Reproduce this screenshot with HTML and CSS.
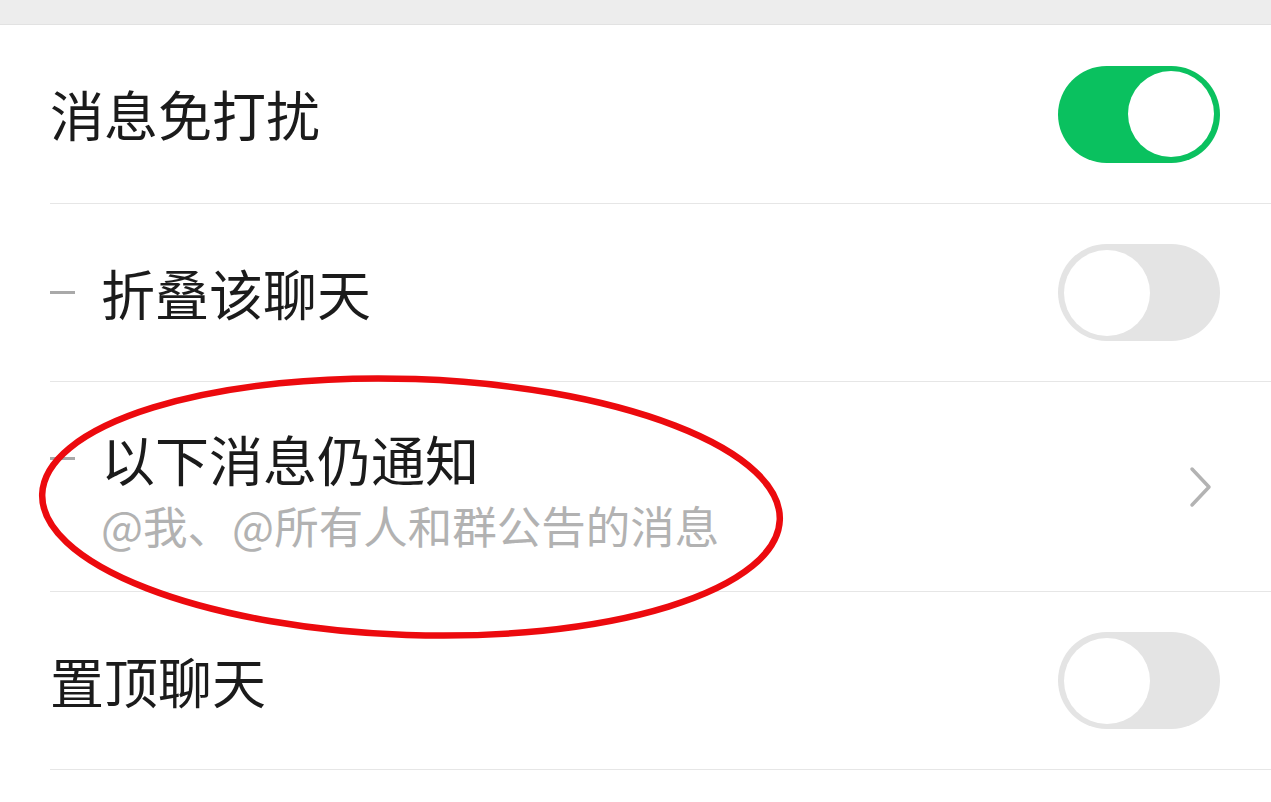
FILE: index.html
```html
<!DOCTYPE html>
<html lang="zh">
<head>
<meta charset="utf-8">
<link rel="stylesheet" href="styles.css">
</head>
<body>
<div class="topbar"></div>
<div class="list">
  <div class="row">
    <div class="label">消息免打扰</div>
    <div class="switch on"><span class="knob"></span></div>
  </div>
  <div class="row">
    <div class="sub-label"><span class="dash"></span><span class="label">折叠该聊天</span></div>
    <div class="switch"><span class="knob"></span></div>
  </div>
  <div class="row tall">
    <div class="sub-block">
      <div class="sub-label"><span class="dash"></span><span class="label">以下消息仍通知</span></div>
      <div class="desc">@我、@所有人和群公告的消息</div>
    </div>
    <svg class="chevron" width="24" height="42" viewBox="0 0 24 42"><path d="M3 3 L20 21 L3 39" fill="none" stroke="#b3b3b3" stroke-width="3.5" stroke-linecap="round" stroke-linejoin="round"/></svg>
  </div>
  <div class="row">
    <div class="label">置顶聊天</div>
    <div class="switch"><span class="knob"></span></div>
  </div>
</div>
<svg class="circle" width="1271" height="802" viewBox="0 0 1271 802">
  <ellipse cx="411" cy="507" rx="369" ry="128" fill="none" stroke="#ec0a0e" stroke-width="6.5" transform="rotate(2 411 507)"/>
</svg>
</body>
</html>
```
FILE: styles.css
```css
html, body {
  margin: 0;
  padding: 0;
  background: #ffffff;
  font-family: "Noto Sans CJK SC", "Noto Sans", sans-serif;
  overflow: hidden;
}
body {
  width: 1271px;
  height: 802px;
  position: relative;
}
.topbar {
  height: 24px;
  background: #ededed;
  border-bottom: 1px solid #e2e2e2;
}
.list {
  padding-left: 50px;
}
.row {
  height: 177px;
  border-bottom: 1px solid #e6e6e6;
  display: flex;
  align-items: center;
  justify-content: space-between;
  padding-right: 51px;
}
.row:first-child {
  height: 178px;
}
.row.tall {
  height: 209px;
  padding-right: 58px;
}
.label {
  font-size: 54px;
  line-height: 64px;
  color: #1b1b1b;
}
.sub-label {
  display: flex;
  align-items: center;
}
.dash {
  width: 25px;
  height: 3px;
  background: #a9a9a9;
  margin-right: 26px;
}
.sub-block {
  display: flex;
  flex-direction: column;
  gap: 8px;
  margin-top: 4px;
}
.desc {
  font-size: 44.5px;
  line-height: 52px;
  color: #b2b2b2;
  padding-left: 51px;
}
.switch {
  width: 162px;
  height: 97px;
  border-radius: 49px;
  background: #e4e4e4;
  box-sizing: border-box;
  padding: 5px 6px;
  display: flex;
  justify-content: flex-start;
  align-items: center;
}
.switch.on {
  background: #0ac15f;
  justify-content: flex-end;
}
.knob {
  width: 86px;
  height: 86px;
  border-radius: 50%;
  background: #ffffff;
}
.circle {
  position: absolute;
  left: 0;
  top: 0;
  pointer-events: none;
}
```
